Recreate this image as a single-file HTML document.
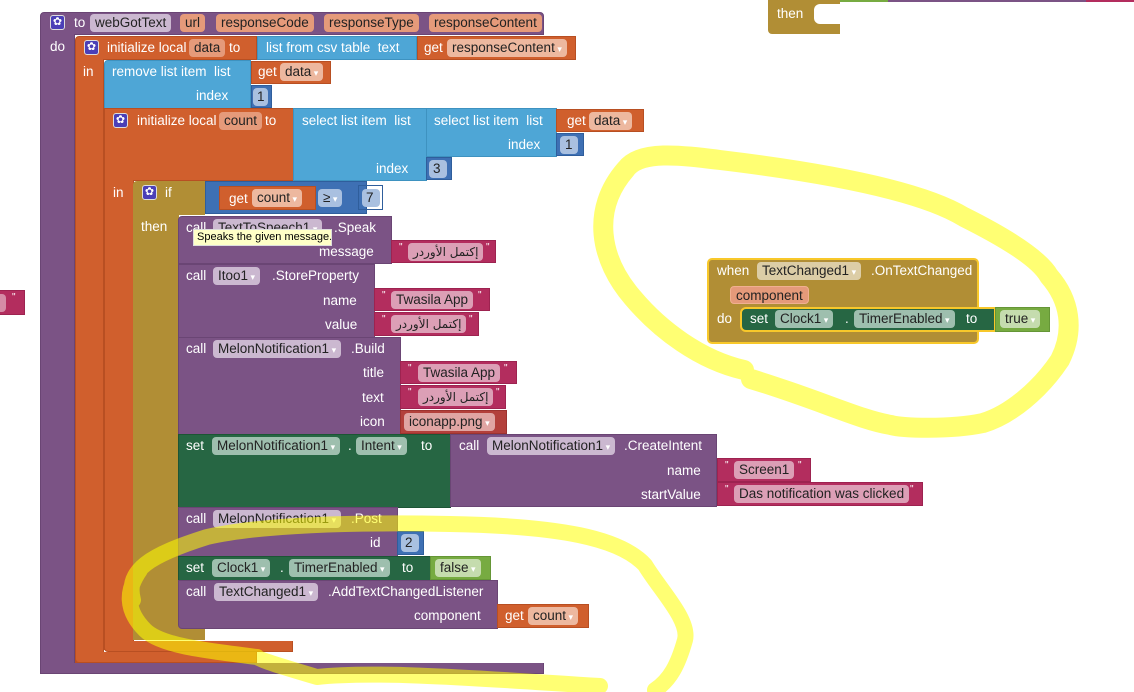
<!DOCTYPE html>
<html><head><meta charset="utf-8"><style>
body{margin:0;width:1134px;height:692px;background:#fff;overflow:hidden;position:relative;font-family:"Liberation Sans","DejaVu Sans",sans-serif;font-size:13.5px;}
.b{position:absolute;box-sizing:border-box;}
.t{position:absolute;color:#fff;white-space:nowrap;line-height:16px;}
.f{position:absolute;box-sizing:border-box;height:18px;line-height:18px;border-radius:4px;padding:0 5px;color:#222;white-space:nowrap;background:rgba(255,255,255,.45);}
.dd:after{content:" ▾";font-size:9px;color:#fff;}
.P{background:#7b5385;border:1px solid #6a4574;}
.O{background:#d05f2d;border:1px solid #b84f22;}
.L{background:#4ea6d6;border:1px solid #3e92c0;}
.M{background:#3e70b4;border:1px solid #2f5e9c;}
.G{background:#b18e35;}
.S{background:#266643;border:1px solid #1c5535;}
.X{background:#b32d5e;border:1px solid #9d2350;}
.N{background:#77ab41;border:1px solid #659636;}
.R{background:#b3403b;border:1px solid #9c332f;}
.gear{position:absolute;width:15px;height:15px;background:#4b3fb7;border:1px solid #ddd;border-radius:3px;box-sizing:border-box;color:#fff;font-size:11px;line-height:13px;text-align:center;}
.q{position:absolute;color:#fff;font-size:10px;}
.ar{direction:rtl;unicode-bidi:isolate;font-family:"DejaVu Sans",sans-serif;font-size:12px;}
</style></head><body>

<div class="b X" style="left:-2px;top:290px;width:27px;height:25px"></div>
<div class="f" style="left:-6px;top:294px;width:12px;padding:0"></div>
<div class="q" style="left:12px;top:292px">"</div>

<div class="b" style="left:840px;top:0;width:48px;height:2px;background:#77ab41"></div>
<div class="b" style="left:888px;top:0;width:198px;height:2px;background:#7b5385"></div>
<div class="b" style="left:1086px;top:0;width:48px;height:2px;background:#b32d5e"></div>
<div class="b G" style="left:768px;top:0;width:72px;height:34px;border-radius:0 0 0 4px"></div>
<div class="b" style="left:814px;top:4px;width:30px;height:20px;background:#fff;border-radius:6px 0 0 6px"></div>
<div class="t" style="left:777px;top:6px">then</div>

<div class="b P" style="left:40px;top:12px;width:504px;height:23px;border-radius:4px 4px 0 0"></div>
<div class="b P" style="left:40px;top:34px;width:35px;height:640px;border-top:0"></div>
<div class="b P" style="left:40px;top:663px;width:504px;height:11px;border-top:0"></div>
<div class="gear" style="left:50px;top:15px">✿</div>
<div class="t" style="left:74px;top:15px">to</div>
<div class="f" style="left:90px;top:14px;background:#cbb8d0">webGotText</div>
<div class="f" style="left:180px;top:14px;background:#e59a7a">url</div>
<div class="f" style="left:216px;top:14px;background:#e59a7a">responseCode</div>
<div class="f" style="left:324px;top:14px;background:#e59a7a">responseType</div>
<div class="f" style="left:429px;top:14px;background:#e59a7a">responseContent</div>
<div class="t" style="left:50px;top:39px">do</div>

<div class="b O" style="left:75px;top:36px;width:182px;height:24px;border-radius:4px 0 0 0"></div>
<div class="b O" style="left:75px;top:59px;width:29px;height:604px;border-top:0"></div>
<div class="b O" style="left:75px;top:652px;width:182px;height:11px;border-top:0;border-radius:0 0 0 4px"></div>
<div class="gear" style="left:84px;top:40px">✿</div>
<div class="t" style="left:107px;top:40px">initialize local</div>
<div class="f" style="left:189px;top:39px;background:#e59a7a">data</div>
<div class="t" style="left:229px;top:40px">to</div>
<div class="b L" style="left:257px;top:36px;width:160px;height:24px"></div>
<div class="t" style="left:266px;top:40px">list from csv table&nbsp; text</div>
<div class="b O" style="left:417px;top:36px;width:159px;height:24px"></div>
<div class="t" style="left:424px;top:40px">get</div>
<div class="f dd" style="left:447px;top:39px;background:#edb89f">responseContent</div>
<div class="t" style="left:83px;top:64px">in</div>

<div class="b L" style="left:104px;top:60px;width:147px;height:49px;border-radius:4px 0 0 0"></div>
<div class="t" style="left:112px;top:64px">remove list item&nbsp; list</div>
<div class="t" style="left:196px;top:88px">index</div>
<div class="b O" style="left:251px;top:61px;width:80px;height:23px"></div>
<div class="t" style="left:258px;top:64px">get</div>
<div class="f dd" style="left:280px;top:63px;background:#edb89f">data</div>
<div class="b M" style="left:251px;top:85px;width:21px;height:23px"></div>
<div class="f" style="left:253px;top:88px;width:15px;padding:0 4px;background:#a9c0e0">1</div>

<div class="b O" style="left:104px;top:108px;width:190px;height:73px"></div>
<div class="b O" style="left:104px;top:180px;width:30px;height:470px;border-top:0"></div>
<div class="b O" style="left:104px;top:641px;width:189px;height:11px;border-top:0;border-radius:0 0 0 4px"></div>
<div class="gear" style="left:113px;top:113px">✿</div>
<div class="t" style="left:137px;top:113px">initialize local</div>
<div class="f" style="left:219px;top:112px;background:#e59a7a">count</div>
<div class="t" style="left:265px;top:113px">to</div>
<div class="b L" style="left:293px;top:108px;width:134px;height:73px"></div>
<div class="t" style="left:302px;top:113px">select list item&nbsp; list</div>
<div class="t" style="left:376px;top:161px">index</div>
<div class="b L" style="left:426px;top:108px;width:131px;height:49px"></div>
<div class="t" style="left:434px;top:113px">select list item&nbsp; list</div>
<div class="t" style="left:508px;top:137px">index</div>
<div class="b O" style="left:556px;top:109px;width:88px;height:23px"></div>
<div class="t" style="left:567px;top:113px">get</div>
<div class="f dd" style="left:589px;top:112px;background:#edb89f">data</div>
<div class="b M" style="left:556px;top:133px;width:28px;height:23px"></div>
<div class="f" style="left:560px;top:136px;width:18px;padding:0 5px;background:#a9c0e0">1</div>
<div class="b M" style="left:426px;top:157px;width:26px;height:23px"></div>
<div class="f" style="left:429px;top:160px;width:18px;padding:0 4px;background:#a9c0e0">3</div>
<div class="t" style="left:113px;top:185px">in</div>

<div class="b G" style="left:133px;top:181px;width:72px;height:34px;border-radius:4px 0 0 0"></div>
<div class="b G" style="left:133px;top:214px;width:46px;height:426px"></div>
<div class="b G" style="left:133px;top:628px;width:72px;height:12px"></div>
<div class="gear" style="left:142px;top:185px">✿</div>
<div class="t" style="left:165px;top:185px">if</div>
<div class="t" style="left:141px;top:219px">then</div>
<div class="b M" style="left:205px;top:181px;width:162px;height:33px"></div>
<div class="b O" style="left:219px;top:186px;width:97px;height:24px"></div>
<div class="t" style="left:229px;top:191px">get</div>
<div class="f dd" style="left:252px;top:189px;background:#edb89f">count</div>
<div class="f dd" style="left:318px;top:189px;background:#a9c0e0">≥</div>
<div class="b" style="left:358px;top:185px;width:25px;height:25px;border:1px solid #2f5e9c"></div>
<div class="f" style="left:362px;top:189px;width:18px;padding:0 4px;background:#a9c0e0">7</div>

<div class="b P" style="left:178px;top:216px;width:214px;height:48px;border-radius:4px 0 0 0"></div>
<div class="t" style="left:186px;top:220px">call</div>
<div class="f dd" style="left:213px;top:219px;background:#cbb8d0">TextToSpeech1</div>
<div class="t" style="left:334px;top:220px">.Speak</div>
<div class="t" style="left:319px;top:244px">message</div>
<div class="b X" style="left:391px;top:240px;width:105px;height:23px"></div>
<div class="q" style="left:399px;top:242px">"</div>
<div class="f ar" style="left:408px;top:243px;background:#dc9fb6">إكتمل الأوردر</div>
<div class="q" style="left:486px;top:242px">"</div>
<div class="b" style="left:193px;top:229px;width:139px;height:17px;background:#ffffc7;border:1px solid #ddd;color:#000;font-size:11px;line-height:15px;padding-left:3px;white-space:nowrap;overflow:hidden">Speaks the given message.</div>

<div class="b P" style="left:178px;top:264px;width:197px;height:74px"></div>
<div class="t" style="left:186px;top:268px">call</div>
<div class="f dd" style="left:213px;top:267px;background:#cbb8d0">Itoo1</div>
<div class="t" style="left:272px;top:268px">.StoreProperty</div>
<div class="t" style="left:323px;top:293px">name</div>
<div class="t" style="left:325px;top:317px">value</div>
<div class="b X" style="left:374px;top:288px;width:116px;height:23px"></div>
<div class="q" style="left:382px;top:290px">"</div>
<div class="f" style="left:391px;top:291px;background:#dc9fb6">Twasila App</div>
<div class="q" style="left:478px;top:290px">"</div>
<div class="b X" style="left:374px;top:312px;width:105px;height:24px"></div>
<div class="q" style="left:382px;top:314px">"</div>
<div class="f ar" style="left:391px;top:315px;background:#dc9fb6">إكتمل الأوردر</div>
<div class="q" style="left:469px;top:314px">"</div>

<div class="b P" style="left:178px;top:337px;width:223px;height:98px"></div>
<div class="t" style="left:186px;top:341px">call</div>
<div class="f dd" style="left:213px;top:340px;background:#cbb8d0">MelonNotification1</div>
<div class="t" style="left:351px;top:341px">.Build</div>
<div class="t" style="left:363px;top:365px">title</div>
<div class="t" style="left:362px;top:390px">text</div>
<div class="t" style="left:360px;top:414px">icon</div>
<div class="b X" style="left:400px;top:361px;width:117px;height:23px"></div>
<div class="q" style="left:408px;top:363px">"</div>
<div class="f" style="left:418px;top:364px;background:#dc9fb6">Twasila App</div>
<div class="q" style="left:504px;top:363px">"</div>
<div class="b X" style="left:400px;top:385px;width:106px;height:24px"></div>
<div class="q" style="left:408px;top:387px">"</div>
<div class="f ar" style="left:418px;top:388px;background:#dc9fb6">إكتمل الأوردر</div>
<div class="q" style="left:496px;top:387px">"</div>
<div class="b R" style="left:400px;top:410px;width:107px;height:24px"></div>
<div class="f dd" style="left:404px;top:413px;background:#e0a5a3">iconapp.png</div>

<div class="b S" style="left:178px;top:434px;width:273px;height:74px"></div>
<div class="t" style="left:186px;top:438px">set</div>
<div class="f dd" style="left:212px;top:437px;background:#9ebfae">MelonNotification1</div>
<div class="t" style="left:348px;top:438px">.</div>
<div class="f dd" style="left:356px;top:437px;background:#9ebfae">Intent</div>
<div class="t" style="left:421px;top:438px">to</div>
<div class="b P" style="left:450px;top:434px;width:267px;height:73px"></div>
<div class="t" style="left:459px;top:438px">call</div>
<div class="f dd" style="left:487px;top:437px;background:#cbb8d0">MelonNotification1</div>
<div class="t" style="left:624px;top:438px">.CreateIntent</div>
<div class="t" style="left:667px;top:463px">name</div>
<div class="t" style="left:641px;top:487px">startValue</div>
<div class="b X" style="left:717px;top:458px;width:94px;height:24px"></div>
<div class="q" style="left:725px;top:460px">"</div>
<div class="f" style="left:734px;top:461px;background:#dc9fb6">Screen1</div>
<div class="q" style="left:798px;top:460px">"</div>
<div class="b X" style="left:717px;top:482px;width:206px;height:24px"></div>
<div class="q" style="left:725px;top:484px">"</div>
<div class="f" style="left:734px;top:485px;background:#dc9fb6">Das notification was clicked</div>
<div class="q" style="left:910px;top:484px">"</div>

<div class="b P" style="left:178px;top:507px;width:220px;height:50px"></div>
<div class="t" style="left:186px;top:511px">call</div>
<div class="f dd" style="left:213px;top:510px;background:#cbb8d0">MelonNotification1</div>
<div class="t" style="left:351px;top:511px">.Post</div>
<div class="t" style="left:370px;top:535px">id</div>
<div class="b M" style="left:397px;top:531px;width:27px;height:24px"></div>
<div class="f" style="left:401px;top:534px;width:18px;padding:0 4px;background:#a9c0e0">2</div>

<div class="b S" style="left:178px;top:556px;width:253px;height:25px"></div>
<div class="t" style="left:186px;top:560px">set</div>
<div class="f dd" style="left:212px;top:559px;background:#9ebfae">Clock1</div>
<div class="t" style="left:280px;top:560px">.</div>
<div class="f dd" style="left:289px;top:559px;background:#9ebfae">TimerEnabled</div>
<div class="t" style="left:402px;top:560px">to</div>
<div class="b N" style="left:430px;top:556px;width:61px;height:24px"></div>
<div class="f dd" style="left:435px;top:559px;background:#c5dcae">false</div>

<div class="b P" style="left:178px;top:580px;width:320px;height:49px;border-radius:0 0 0 4px"></div>
<div class="t" style="left:186px;top:584px">call</div>
<div class="f dd" style="left:214px;top:583px;background:#cbb8d0">TextChanged1</div>
<div class="t" style="left:328px;top:584px">.AddTextChangedListener</div>
<div class="t" style="left:414px;top:608px">component</div>
<div class="b O" style="left:497px;top:604px;width:92px;height:24px"></div>
<div class="t" style="left:505px;top:608px">get</div>
<div class="f dd" style="left:528px;top:607px;background:#edb89f">count</div>

<div class="b G" style="left:707px;top:258px;width:272px;height:86px;border:2px solid #f8c82a;border-radius:5px"></div>
<div class="t" style="left:717px;top:263px">when</div>
<div class="f dd" style="left:757px;top:262px;background:#dccda6;color:#222">TextChanged1</div>
<div class="t" style="left:871px;top:263px">.OnTextChanged</div>
<div class="f" style="left:730px;top:286px;background:#e59a7a;border:1px solid #f0b090">component</div>
<div class="t" style="left:717px;top:311px">do</div>
<div class="b S" style="left:740px;top:307px;width:256px;height:25px;border:2px solid #f8c82a;border-radius:6px 0 0 6px"></div>
<div class="t" style="left:750px;top:311px">set</div>
<div class="f dd" style="left:775px;top:310px;background:#9ebfae">Clock1</div>
<div class="t" style="left:845px;top:311px">.</div>
<div class="f dd" style="left:854px;top:310px;background:#9ebfae">TimerEnabled</div>
<div class="t" style="left:966px;top:311px">to</div>
<div class="b N" style="left:995px;top:307px;width:55px;height:25px"></div>
<div class="f dd" style="left:1000px;top:310px;background:#c5dcae">true</div>

<svg width="1134" height="692" style="position:absolute;left:0;top:0" fill="none" stroke="rgba(255,255,0,0.55)" stroke-linecap="round" stroke-linejoin="round">
<path stroke-width="20" d="M744 370 C700 360 660 330 633 298 C600 260 590 210 626 169 C640 150 680 155 720 160 C820 172 920 190 964 217 C1010 240 1040 260 1049 276 C1070 300 1075 330 1060 360 C1040 390 1010 415 983 423 C950 430 900 428 891 425 C860 420 820 400 751 379"/>
<path stroke-width="16" d="M133 600 C125 570 150 555 207 537 C260 525 350 522 450 524 C560 526 620 538 645 565 C660 590 690 620 685 640 C678 665 670 680 655 690 M600 686 C500 680 380 670 317 677 C280 666 260 660 257 657 C200 650 160 645 145 630 C125 610 126 590 140 570"/>
</svg>
</body></html>
